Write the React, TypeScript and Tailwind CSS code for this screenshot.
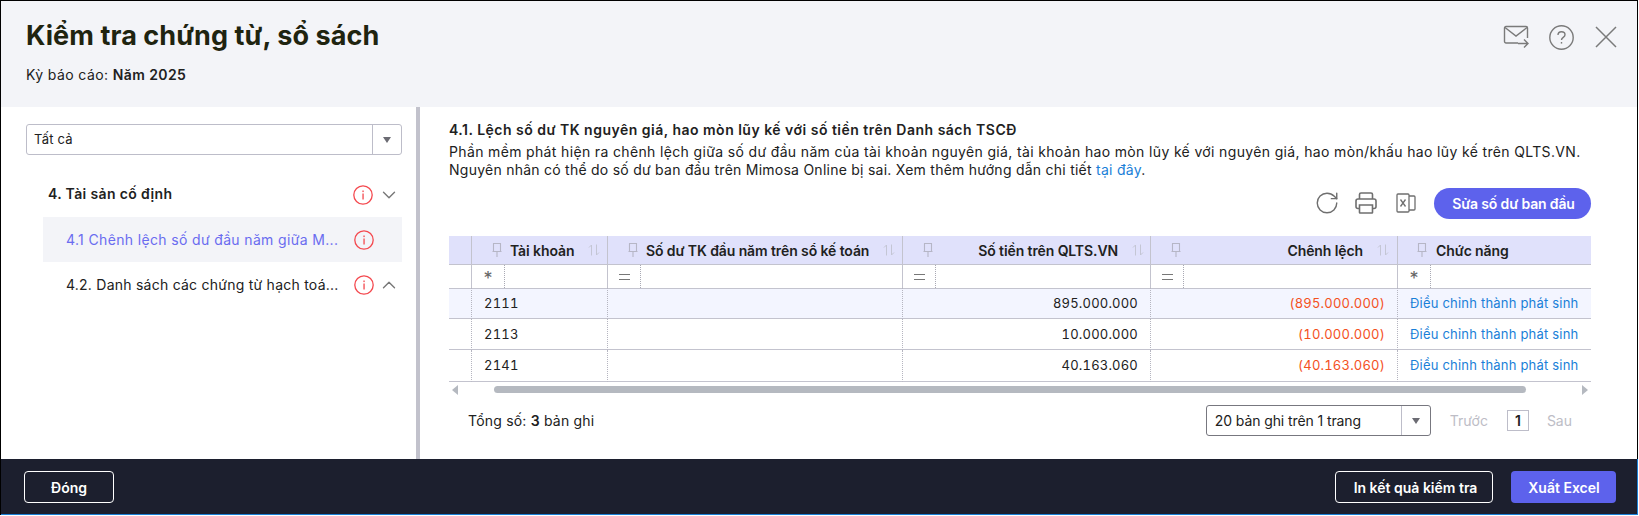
import { ChevronDown, ChevronUp, RotateCw } from "lucide-react";

const rows = [
  { account: "2111", amount: "895.000.000", diff: "(895.000.000)" },
  { account: "2113", amount: "10.000.000", diff: "(10.000.000)" },
  { account: "2141", amount: "40.163.060", diff: "(40.163.060)" },
];

const gridCols = "grid grid-cols-[23px_136px_295px_248px_247px_193px]";
const dataCell = "border-r border-b border-r-[#b5b5c0] border-b-[#c3c3ce] [border-right-style:dotted]";

function InfoIcon() {
  return (
    <svg width="20" height="20" viewBox="0 0 20 20" fill="none" className="shrink-0">
      <circle cx="10" cy="10" r="9.200" stroke="#f4494f" strokeWidth="1.300" />
      <rect x="9.400" y="5.500" width="1.300" height="1.600" fill="#f4494f" />
      <rect x="9.400" y="8.500" width="1.300" height="6" fill="#f4494f" />
    </svg>
  );
}

function PinIcon() {
  return (
    <svg width="10" height="14" viewBox="0 0 10 14" fill="none" stroke="#b6b6c6" strokeWidth="1.100" className="shrink-0">
      <path d="M1.500 .5h7v8h-7zM.5 8.500h9M5 8.500v5.500" />
    </svg>
  );
}

function SortIcon() {
  return (
    <svg width="12" height="12" viewBox="0 0 12 12" fill="none" stroke="#c4c6d4" strokeWidth="1" className="shrink-0">
      <path d="M3.500 11.500V1L1 3.500M8.500 .5V11l2.500-2.500" />
    </svg>
  );
}

function Caret() {
  return <span className="h-0 w-0 border-x-[4.500px] border-t-[6px] border-x-transparent border-t-[#6b6b73]" />;
}

function HeaderCell({ label, right, tight }: { label: string; right?: boolean; tight?: boolean }) {
  return (
    <div className={`flex items-center border-r border-b border-[#c3c3ce] pl-[20px] ${tight ? "pr-[6px]" : "pr-[8px]"}`}>
      <PinIcon />
      <span
        className={`ml-[8px] flex-1 text-[14px] font-semibold tracking-[-0.1px] whitespace-nowrap text-[#212121] ${right ? "text-right" : ""}`}
      >
        {label}
      </span>
      <span className="ml-[14px]">
        <SortIcon />
      </span>
    </div>
  );
}

function FilterOp({ op }: { op: string }) {
  return (
    <div className="flex w-[33px] items-center justify-center border-r border-dotted border-[#a9a9b4] text-[#666]">
      {op === "=" ? (
        <span className="h-[6px] w-[11px] border-y-[1.500px] border-[#777]" />
      ) : (
        <span className="pt-[5px] text-[18px] leading-[18px]">*</span>
      )}
    </div>
  );
}

function FilterCell({ op }: { op: string }) {
  return (
    <div className="flex border-r border-b border-[#c3c3ce]">
      <FilterOp op={op} />
    </div>
  );
}

export default function App() {
  return (
    <div className="flex h-[515px] w-[1638px] flex-col border-t border-r border-l border-black bg-white font-['Inter',sans-serif] text-[14px] text-[#212121]">
      <header className="flex h-[106px] shrink-0 justify-between bg-[#f3f4f8] pt-[17px] pr-[20px] pl-[25px]">
        <div>
          <h1 className="text-[27px] leading-[36px] font-bold tracking-[0.08px] text-[#1f2410]">
            Kiểm tra chứng từ, sổ sách
          </h1>
          <p className="mt-[11px] leading-[20px] tracking-[0.4px]">
            Kỳ báo cáo: <b className="font-semibold">Năm 2025</b>
          </p>
        </div>
        <div className="mt-[6px] flex h-[26px] items-center">
          <svg width="26" height="24" viewBox="0 0 26 24" fill="none" stroke="#7a7a7a" strokeWidth="1.400">
            <path d="M15 18H3a1.500 1.500 0 0 1-1.500-1.500V3A1.500 1.500 0 0 1 3 1.500h20A1.500 1.500 0 0 1 24.500 3v10" />
            <path d="M2 2.500l11 8.500 11-8.500M15 18.500h10M21 14.500l4 4-4 4" />
          </svg>
          <svg width="25" height="25" viewBox="0 0 25 25" fill="none" stroke="#7a7a7a" strokeWidth="1.400" className="ml-[20px]">
            <circle cx="12.500" cy="12.500" r="11.700" />
            <path d="M9 10c0-2 1.500-3.300 3.500-3.300s3.500 1.300 3.500 3c0 2.800-3.500 2.500-3.500 5.300" />
            <path d="M12.500 17v1.600" />
          </svg>
          <svg width="22" height="22" viewBox="0 0 22 22" fill="none" stroke="#7a7a7a" strokeWidth="1.500" className="ml-[21px]">
            <path d="M1 1l20 20M21 1L1 21" />
          </svg>
        </div>
      </header>

      <main className="flex min-h-0 flex-1">
        <aside className="w-[419px] shrink-0 border-r-4 border-[#c2c2cc] pt-[17px] pr-[14px] pl-[25px]">
          <div className="flex h-[31px] items-stretch rounded-[3px] border border-[#bdbdc9]">
            <span className="flex-1 pl-[7px] text-[13px] leading-[29px] tracking-[0.2px]">Tất cả</span>
            <span className="flex w-[29px] items-center justify-center border-l border-[#bdbdc9]">
              <Caret />
            </span>
          </div>
          <div className="mt-[17px] flex h-[45px] items-center pr-[2px] pl-[22px]">
            <span className="-mt-[3px] flex-1 font-semibold tracking-[0.35px]">4. Tài sản cố định</span>
            <InfoIcon />
            <ChevronDown size={22} strokeWidth={1.500} className="ml-[5px] text-[#777]" />
          </div>
          <div className="ml-[17px] flex h-[45px] items-center bg-[#f3f4f8] pl-[23px] text-[#6a6cf0]">
            <span className="w-[274px] tracking-[0.35px] whitespace-nowrap">4.1 Chênh lệch số dư đầu năm giữa M...</span>
            <span className="ml-[14px]">
              <InfoIcon />
            </span>
          </div>
          <div className="ml-[17px] flex h-[45px] items-center pl-[23px]">
            <span className="w-[274px] tracking-[0.24px] whitespace-nowrap">4.2. Danh sách các chứng từ hạch toá...</span>
            <span className="ml-[14px]">
              <InfoIcon />
            </span>
            <ChevronUp size={22} strokeWidth={1.500} className="ml-[4px] text-[#777]" />
          </div>
        </aside>

        <section className="min-w-0 flex-1 pt-[14px] pr-[46px] pl-[29px]">
          <h2 className="leading-[18px] font-semibold tracking-[0.49px] whitespace-nowrap">
            4.1. Lệch số dư TK nguyên giá, hao mòn lũy kế với số tiền trên Danh sách TSCĐ
          </h2>
          <p className="mt-[4px] leading-[18px] tracking-[0.35px] whitespace-nowrap">
            Phần mềm phát hiện ra chênh lệch giữa số dư đầu năm của tài khoản nguyên giá, tài khoản hao mòn lũy kế với
            nguyên giá, hao mòn/khấu hao lũy kế trên QLTS.VN.
            <br />
            <span className="tracking-[0.25px]">
              Nguyên nhân có thể do số dư ban đầu trên Mimosa Online bị sai. Xem thêm hướng dẫn chi tiết{" "}
              <a className="text-[#1a7fd8]">tại đây</a>.
            </span>
          </p>

          <div className="mt-[8px] flex h-[32px] items-center justify-end text-[#6f6f6f]">
            <RotateCw size={26} strokeWidth={1.300} />
            <svg width="22" height="22" viewBox="0 0 22 22" fill="none" stroke="#6f6f6f" strokeWidth="1.600" className="ml-[15px]">
              <path d="M4.500 7V2.500A1.500 1.500 0 0 1 6 1h10a1.500 1.500 0 0 1 1.500 1.500V7" />
              <path d="M4.500 16.500H3A2 2 0 0 1 1 14.500V9a2 2 0 0 1 2-2h16a2 2 0 0 1 2 2v5.500a2 2 0 0 1-2 2h-1.500" />
              <path d="M4.500 13h13v7.500a.5.5 0 0 1-.5.5H5a.5.5 0 0 1-.5-.5z" />
            </svg>
            <svg width="20" height="20" viewBox="0 0 20 20" fill="none" stroke="#6f6f6f" strokeWidth="1.300" className="ml-[19px]">
              <rect x="1" y="1" width="12" height="18" rx="1" />
              <path d="M13 3h5a1 1 0 0 1 1 1v12a1 1 0 0 1-1 1h-5" />
              <path d="M4.500 6.500l5 7M9.500 6.500l-5 7" />
            </svg>
            <button className="ml-[18px] h-[31px] w-[157px] rounded-full bg-[#5d62ec] pl-[2px] font-semibold tracking-[-0.15px] text-white">
              Sửa số dư ban đầu
            </button>
          </div>

          <div className="mt-[17px] w-[1142px] overflow-hidden">
            <div className={`${gridCols} h-[29px] bg-[#e0e1fb]`}>
              <div className="border-r border-b border-[#c3c3ce]" />
              <HeaderCell label="Tài khoản" />
              <HeaderCell label="Số dư TK đầu năm trên sổ kế toán" />
              <HeaderCell label="Số tiền trên QLTS.VN" right tight />
              <HeaderCell label="Chênh lệch" right />
              <div className="flex items-center border-b border-[#c3c3ce] pl-[19px]">
                <PinIcon />
                <span className="ml-[9px] font-semibold tracking-[-0.1px] whitespace-nowrap">Chức năng</span>
              </div>
            </div>
            <div className={`${gridCols} h-[23px]`}>
              <div className="border-r border-b border-[#c3c3ce]" />
              <FilterCell op="*" />
              <FilterCell op="=" />
              <FilterCell op="=" />
              <FilterCell op="=" />
              <div className="flex border-b border-[#c3c3ce]">
                <FilterOp op="*" />
              </div>
            </div>
            {rows.map((row, i) => (
              <div
                key={row.account}
                className={`${gridCols} ${i === 2 ? "h-[32px]" : "h-[31px]"} text-[13px] ${i === 0 ? "bg-[#f3f5ff]" : ""}`}
              >
                <div className={dataCell} />
                <div className={`${dataCell} pl-[12px] leading-[30px] tracking-[0.2px] tabular-nums`}>{row.account}</div>
                <div className={dataCell} />
                <div className={`${dataCell} pr-[12px] text-right leading-[30px] tracking-[0.2px] tabular-nums`}>
                  {row.amount}
                </div>
                <div className={`${dataCell} pr-[12px] text-right leading-[30px] tracking-[0.2px] text-[#f4511e] tabular-nums`}>
                  {row.diff}
                </div>
                <div className="border-b border-[#c3c3ce] pl-[12px] leading-[30px] tracking-[0.2px] whitespace-nowrap text-[#1a7fd8]">
                  Điều chỉnh thành phát sinh
                </div>
              </div>
            ))}
            <div className="flex h-[15px] items-center px-[3px]">
              <span className="h-0 w-0 border-y-[5px] border-r-[6px] border-y-transparent border-r-[#b5b9c0]" />
              <div className="ml-[36px] h-[7px] w-[1032px] rounded-full bg-[#b5b9c0]" />
              <span className="ml-auto h-0 w-0 border-y-[5px] border-l-[6px] border-y-transparent border-l-[#b5b9c0]" />
            </div>
          </div>

          <div className="mt-[8px] flex h-[31px] w-[1142px] items-center pr-[19px] pl-[19px]">
            <span className="flex-1 tracking-[0.2px]">
              Tổng số: <b className="font-semibold">3</b> bản ghi
            </span>
            <div className="flex h-[31px] w-[225px] items-stretch rounded-[3px] border border-[#77777f]">
              <span className="flex-1 pl-[8px] leading-[29px] tracking-[-0.1px]">20 bản ghi trên 1 trang</span>
              <span className="flex w-[29px] items-center justify-center border-l border-[#bdbdc9]">
                <Caret />
              </span>
            </div>
            <span className="ml-[19px] text-[#bdbdc6]">Trước</span>
            <span className="ml-[19px] flex h-[21px] w-[22px] items-center justify-center border border-[#bdbdc9] font-semibold">
              1
            </span>
            <span className="ml-[18px] text-[#bdbdc6]">Sau</span>
          </div>
        </section>
      </main>

      <footer className="-mr-px flex h-[56px] shrink-0 justify-between border-r border-b border-[#1b7fd6] bg-[#1c1f2e] pt-[12px] pr-[21px] pl-[23px] font-semibold text-white">
        <button className="h-[32px] w-[90px] rounded-[4px] border border-white">Đóng</button>
        <div className="flex gap-[18px]">
          <button className="h-[32px] w-[158px] rounded-[4px] border border-white pl-[3px]">In kết quả kiểm tra</button>
          <button className="h-[32px] w-[105px] rounded-[4px] bg-[#5d62ec] pl-[1px]">Xuất Excel</button>
        </div>
      </footer>
    </div>
  );
}
